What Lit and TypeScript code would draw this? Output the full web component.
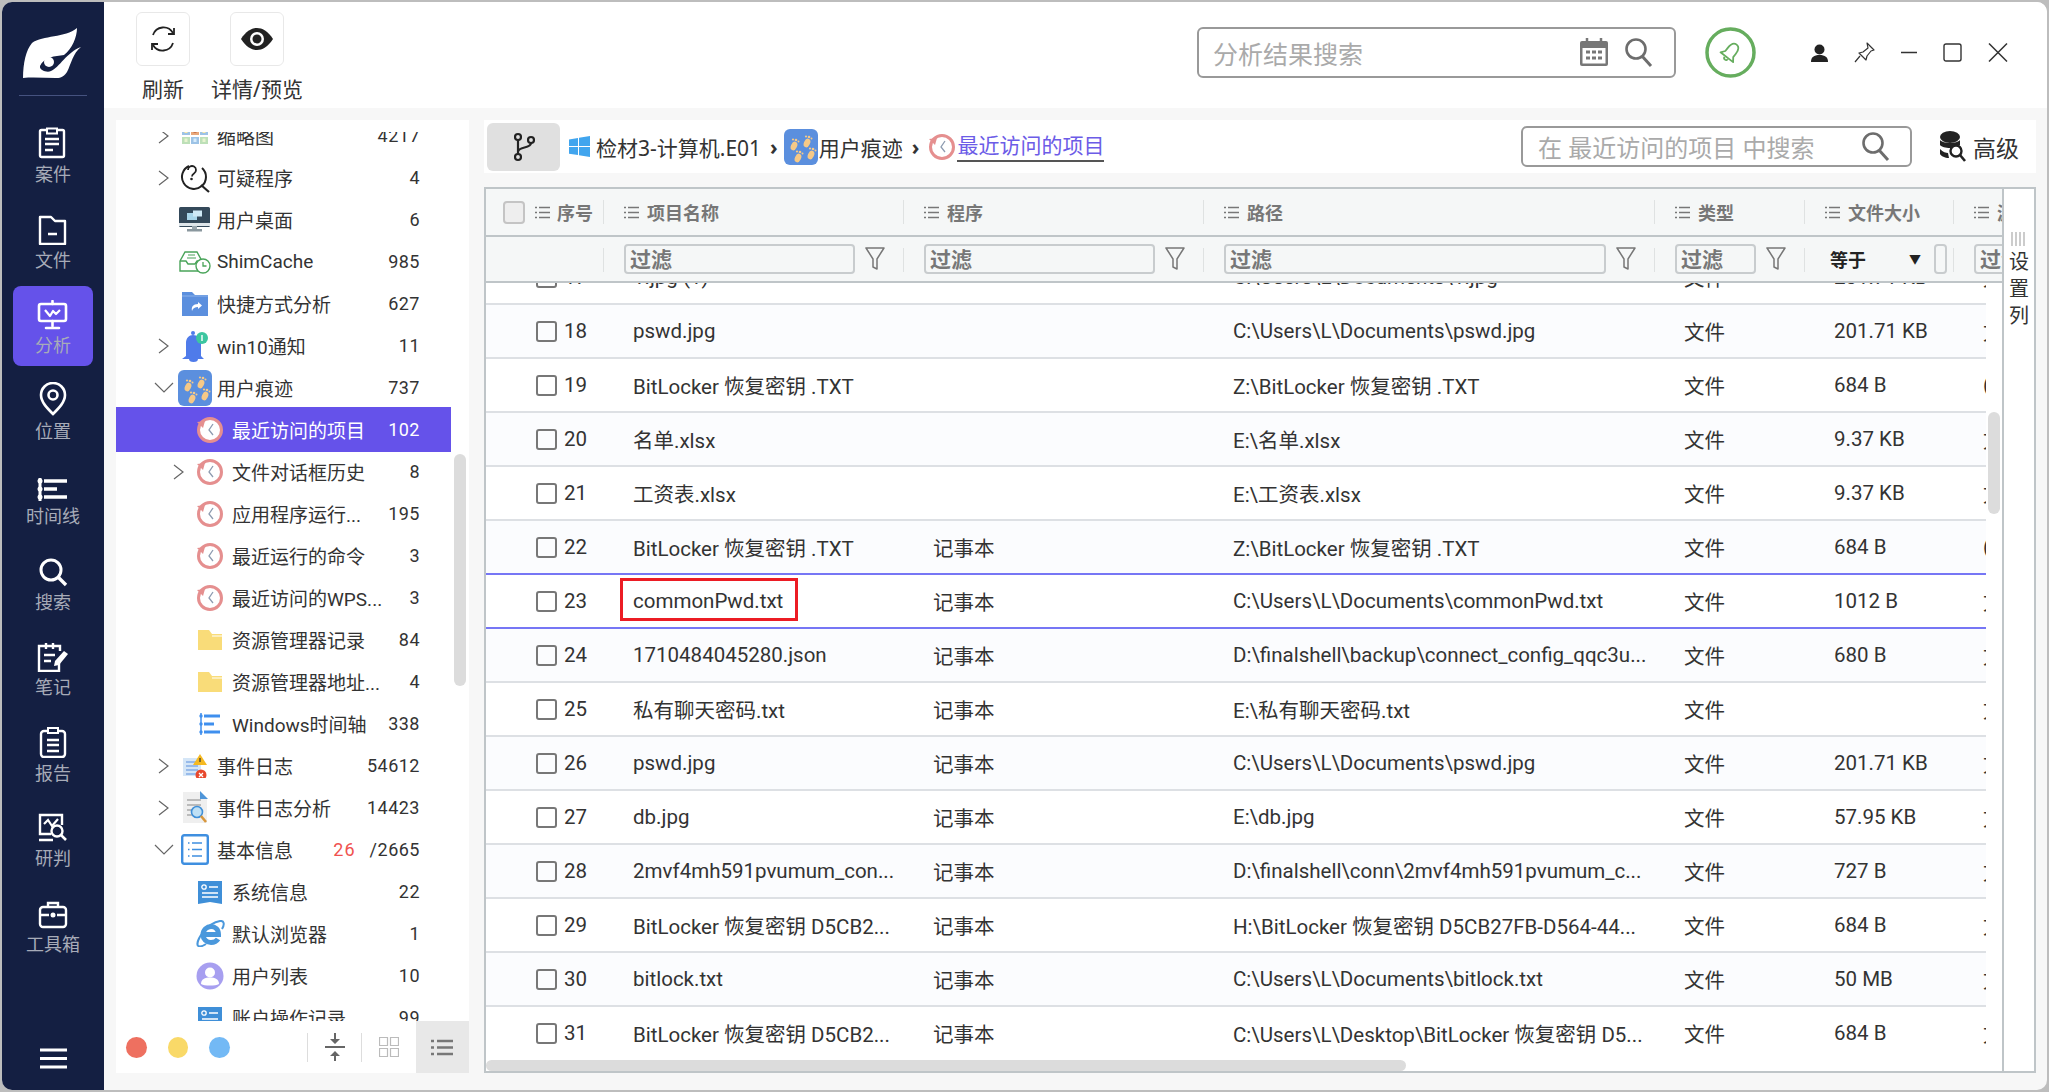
import { LitElement, html, css, svg } from 'lit';
import { customElement } from 'lit/decorators.js';
import { classMap } from 'lit/directives/class-map.js';

const ic = (w: number, h: number, body: unknown, vb = `0 0 ${w} ${h}`) =>
  html`<svg width=${w} height=${h} viewBox=${vb} fill="none">${body}</svg>`;

// ---- nav icons
const navIcons: Record<string, unknown> = {
  case: ic(30, 32, svg`<rect x="2" y="3" width="24" height="27" rx="1.5" stroke="#fff" stroke-width="2.4"/><path d="M9 1.500h10v5H9z" fill="#141f42" stroke="#fff" stroke-width="2"/><path d="M7 12h14M7 17h14M7 23h8" stroke="#fff" stroke-width="2.4"/>`),
  file: ic(30, 30, svg`<path d="M2 2h11l4 4h10v23H2z" stroke="#fff" stroke-width="2.4" stroke-linejoin="round"/><path d="M10 19h9" stroke="#fff" stroke-width="2.4"/>`),
  analyse: ic(32, 30, svg`<rect x="2" y="4" width="27" height="17" rx="2" stroke="#fff" stroke-width="2.6"/><path d="M15.500 1v3M15.500 21v5M9 28h13" stroke="#fff" stroke-width="2.6" stroke-linecap="round"/><path d="M8 10l5 6 3-5 3 3 4-4" stroke="#fff" stroke-width="2.200" stroke-linejoin="round"/>`),
  place: ic(30, 34, svg`<path d="M15 32C9 26 3 20 3 13a12 12 0 0 1 24 0c0 7-6 13-12 19z" stroke="#fff" stroke-width="2.600"/><circle cx="15" cy="13" r="4.500" stroke="#fff" stroke-width="2.600"/>`),
  timeline: ic(32, 24, svg`<path d="M3 1v23" stroke="#fff" stroke-width="3"/><path d="M7 4h23M7 12h13M7 20h23" stroke="#fff" stroke-width="3.600"/><circle cx="3" cy="4" r="2.500" fill="#fff"/><circle cx="3" cy="12" r="2.500" fill="#fff"/><circle cx="3" cy="20" r="2.500" fill="#fff"/>`),
  search: ic(30, 30, svg`<circle cx="13" cy="13" r="10" stroke="#fff" stroke-width="3"/><path d="M20 20l8 8" stroke="#fff" stroke-width="3.400"/>`),
  note: ic(32, 30, svg`<path d="M22 17v12H2V4h21v5" stroke="#fff" stroke-width="2.400"/><path d="M9 1v6M16 1v6M7 13h11M7 19h7" stroke="#fff" stroke-width="2.400"/><path d="M17 24l1-5L27 9l4 3-9 11z" fill="#fff"/>`),
  report: ic(28, 32, svg`<rect x="2" y="5" width="24" height="26" rx="3" stroke="#fff" stroke-width="2.400"/><path d="M9 2h10v5H9z" fill="#141f42" stroke="#fff" stroke-width="2"/><path d="M8 14h12M8 19h12M8 25h12" stroke="#fff" stroke-width="2.400"/>`),
  judge: ic(30, 30, svg`<path d="M13 21H2V2h22v10" stroke="#fff" stroke-width="2.400"/><path d="M6 11l4-4 4 6 6-7" stroke="#fff" stroke-width="2.200"/><circle cx="19" cy="18" r="5.500" stroke="#fff" stroke-width="2.400"/><path d="M23 22l5 5M1 27h14" stroke="#fff" stroke-width="2.600"/>`),
  tools: ic(30, 28, svg`<rect x="2" y="6" width="26" height="20" rx="3" stroke="#fff" stroke-width="2.400"/><path d="M10 6V2h10v4M2 14h9M19 14h9" stroke="#fff" stroke-width="2.400"/><circle cx="15" cy="14" r="2.500" fill="#fff"/>`),
};

// ---- tree icons
const clock = ic(28, 28, svg`<circle cx="14" cy="14" r="11.500" fill="#fff" stroke="#e58f8f" stroke-width="3"/><path d="M1 6l8-1-2 7z" fill="#e58f8f"/><path d="M17 8l-4 6 4 5" stroke="#8d9bb0" stroke-width="1.300"/>`);
const foot = (x: number, y: number) => svg`<ellipse cx=${x} cy=${y} rx="3" ry="4.500" fill="#f6c987" transform="rotate(25 ${x} ${y})"/><circle cx=${x + 2} cy=${y - 6} r="1.300" fill="#f6c987"/><circle cx=${x + 4.500} cy=${y - 4.500} r="1" fill="#f6c987"/><circle cx=${x - 1} cy=${y - 6.500} r="1.100" fill="#f6c987"/>`;
const feetBody = svg`<rect width="34" height="36" rx="6" fill="#5b8fde"/>${foot(10, 17)}${foot(23, 14)}${foot(14, 29)}${foot(27, 26)}`;
const feet = ic(34, 36, feetBody);
const feetWide = ic(36, 36, feetBody, '0 0 34 36');
const folder = ic(24, 20, svg`<path d="M0 0h11l3 4h10v16H0z" fill="#f9dc79"/><path d="M14 6h10" stroke="#fff" stroke-width="1"/>`);
const sysinfo = ic(24, 24, svg`<path d="M0 1h24v23l-12-2-12 2z" fill="#3f8fd8"/><circle cx="6" cy="7" r="2.200" stroke="#fff" stroke-width="1.300"/><path d="M11 7h9M4 13h16M4 17h16" stroke="#fff" stroke-width="1.600"/>`);
const thumbCell = (x: number, y: number, c: string, d: string) => svg`<rect x=${x} y=${y} width="8" height="7" fill=${c}/><rect x=${x + 2.500} y=${y + 1.500} width="3" height="3.500" fill=${d}/>`;

const treeIcons: Record<string, unknown> = {
  thumb: ic(26, 16, svg`${thumbCell(0, 0, '#9dc3e6', '#fbe9a8')}${thumbCell(9, 0, '#e8a77a', '#c9744a')}${thumbCell(18, 0, '#9dc3e6', '#fbe9a8')}${thumbCell(0, 9, '#bde0b8', '#e8f4d0')}${thumbCell(9, 9, '#9dc3e6', '#d7ecfb')}${thumbCell(18, 9, '#bde0b8', '#e8f4d0')}`),
  suspect: ic(30, 30, svg`<path d="M9 3a12 12 0 1 0 13 2" stroke="#222" stroke-width="2"/><path d="M21 22l8 7" stroke="#222" stroke-width="2.200"/><path d="M8 7a4 4 0 1 1 6 3.500c-1.500 1-2 2-2 3" stroke="#222" stroke-width="1.800"/><circle cx="11.500" cy="16" r="1.300" fill="#222"/>`),
  desktop: ic(32, 25, svg`<rect width="31" height="20" rx="1.500" fill="#34495a"/><rect y="16" width="31" height="3" fill="#dfe6ea"/><path d="M13 19h5v3h-5z" fill="#9aa7ae"/><rect x="8" y="22" width="15" height="2.500" fill="#8a979e"/><rect x="8" y="6" width="10" height="7" fill="#a9d6ea"/><rect x="14" y="3.500" width="9" height="6" fill="#cfe9f5"/>`),
  shim: ic(32, 24, svg`<path d="M1 11l5-9h12l5 9v10H1z" fill="#fff" stroke="#4aa45a" stroke-width="1.400"/><path d="M1 11h6l2 3h7l2-3h5" stroke="#4aa45a" stroke-width="1.400"/><path d="M9 5h7M8 8h9" stroke="#4aa45a" stroke-width="1.200"/><circle cx="24" cy="16" r="7" fill="#fff" stroke="#4aa45a" stroke-width="1.400"/><path d="M24 12v4h3.500" stroke="#4aa45a" stroke-width="1.300"/>`),
  shortcut: ic(26, 24, svg`<path d="M0 0h10l3 3h13v21H0z" fill="#5b8fde"/><path d="M0 4h26" stroke="#8db2ea" stroke-width="1"/><path d="M10 19c-1-4 1-7 6-7v-2l4 3.500-4 3.500v-2c-3 0-5 1-6 4z" fill="#fff"/>`),
  bell: ic(28, 32, svg`<circle cx="12" cy="3" r="2" fill="#4f7bea"/><path d="M5 26V13c0-5 3-8 7-8s8 3 8 8v13l3 3H1z" fill="#4f7bea"/><path d="M8 29h9a4.500 3 0 0 1-9 0z" fill="#4f7bea"/><circle cx="21" cy="8" r="6" fill="#3cc6a0"/><path d="M21 5v6" stroke="#fff" stroke-width="1.400"/>`),
  feet,
  clock,
  folder,
  timeline: ic(22, 24, svg`<path d="M2 1v22" stroke="#3f8fee" stroke-width="1.500"/><path d="M5 4h16M5 12h10M5 20h16" stroke="#3f8fee" stroke-width="3"/><circle cx="2" cy="4" r="1.700" fill="#3f8fee"/><circle cx="2" cy="12" r="1.700" fill="#3f8fee"/><circle cx="2" cy="20" r="1.700" fill="#3f8fee"/>`),
  event: ic(24, 24, svg`<rect x="0" y="4" width="18" height="18" fill="#d5e6f7"/><path d="M3 8h12M3 12h12M3 16h12M3 20h12" stroke="#5b8fde" stroke-width="1"/><path d="M17 0l7 11H10z" fill="#f5b921"/><path d="M17 4v4" stroke="#333" stroke-width="1.200"/><circle cx="18" cy="21" r="5.500" fill="#e8482c"/><path d="M16 19l4 4M20 19l-4 4" stroke="#fff" stroke-width="1.300"/>`),
  eventlog: ic(26, 33, svg`<path d="M1 1h17l7 7v24H1z" fill="#efefef"/><path d="M18 0l8 8h-8z" fill="#4f95d8"/><path d="M5 9h14M5 14h14M5 19h8M5 24h10" stroke="#aaa" stroke-width="1.300"/><circle cx="15" cy="21" r="5.500" fill="#bfe0f5" stroke="#3f8fd8" stroke-width="1.600"/><path d="M19 25l5 6" stroke="#d8963a" stroke-width="2.600"/>`),
  list: ic(28, 31, svg`<rect x="1.200" y="1.200" width="25.600" height="28.600" rx="2" stroke="#3f8fe0" stroke-width="2.400"/><path d="M7 9h1.500M11 9h10M7 15.500h1.500M11 15.500h10M7 22h1.500M11 22h10" stroke="#3f8fe0" stroke-width="1.600"/>`),
  sysinfo,
  ie: ic(29, 27, svg`<path d="M7 14.500h15.500C22.500 9 19 6.500 15 6.500S7 10 7 14.500s3.500 8 8 8c3 0 5.500-1 7-3.500" stroke="#4a98dc" stroke-width="5"/><path d="M2 26C-1 21 11 3 24 1c4-.5 5 3 2 8M2 26c2 1 5 0 8-2" stroke="#4a98dc" stroke-width="2"/>`),
  user: ic(28, 28, svg`<circle cx="14" cy="14" r="13.500" fill="#a79ff0"/><circle cx="14" cy="10.500" r="5" fill="#fff"/><path d="M5 22c0-5 4-6.500 9-6.500s9 1.500 9 6.500c-2 1-5 1.500-9 1.500s-7-.5-9-1.500z" fill="#fff"/>`),
};

type TreeRow = { label: string; count: string; icon: string; level: 1 | 2; ch?: 'r' | 'd'; sel?: boolean; red?: string };
const tree: TreeRow[] = [
  { label: '缩略图', count: '4217', icon: 'thumb', level: 1, ch: 'r' },
  { label: '可疑程序', count: '4', icon: 'suspect', level: 1, ch: 'r' },
  { label: '用户桌面', count: '6', icon: 'desktop', level: 1 },
  { label: 'ShimCache', count: '985', icon: 'shim', level: 1 },
  { label: '快捷方式分析', count: '627', icon: 'shortcut', level: 1 },
  { label: 'win10通知', count: '11', icon: 'bell', level: 1, ch: 'r' },
  { label: '用户痕迹', count: '737', icon: 'feet', level: 1, ch: 'd' },
  { label: '最近访问的项目', count: '102', icon: 'clock', level: 2, sel: true },
  { label: '文件对话框历史', count: '8', icon: 'clock', level: 2, ch: 'r' },
  { label: '应用程序运行...', count: '195', icon: 'clock', level: 2 },
  { label: '最近运行的命令', count: '3', icon: 'clock', level: 2 },
  { label: '最近访问的WPS...', count: '3', icon: 'clock', level: 2 },
  { label: '资源管理器记录', count: '84', icon: 'folder', level: 2 },
  { label: '资源管理器地址...', count: '4', icon: 'folder', level: 2 },
  { label: 'Windows时间轴', count: '338', icon: 'timeline', level: 2 },
  { label: '事件日志', count: '54612', icon: 'event', level: 1, ch: 'r' },
  { label: '事件日志分析', count: '14423', icon: 'eventlog', level: 1, ch: 'r' },
  { label: '基本信息', count: '/2665', icon: 'list', level: 1, ch: 'd', red: '26' },
  { label: '系统信息', count: '22', icon: 'sysinfo', level: 2 },
  { label: '默认浏览器', count: '1', icon: 'ie', level: 2 },
  { label: '用户列表', count: '10', icon: 'user', level: 2 },
  { label: '账户操作记录', count: '99', icon: 'sysinfo', level: 2 },
];

const navItems = [
  ['case', '案件'], ['file', '文件'], ['analyse', '分析'], ['place', '位置'], ['timeline', '时间线'],
  ['search', '搜索'], ['note', '笔记'], ['report', '报告'], ['judge', '研判'], ['tools', '工具箱'],
];

const rows: string[][] = [
  ['17', '1.jpg (1)', '', 'C:\\Users\\L\\Documents\\1.jpg', '文件', '201.71 KB', '文'],
  ['18', 'pswd.jpg', '', 'C:\\Users\\L\\Documents\\pswd.jpg', '文件', '201.71 KB', '文'],
  ['19', 'BitLocker 恢复密钥 .TXT', '', 'Z:\\BitLocker 恢复密钥 .TXT', '文件', '684 B', '('],
  ['20', '名单.xlsx', '', 'E:\\名单.xlsx', '文件', '9.37 KB', '文'],
  ['21', '工资表.xlsx', '', 'E:\\工资表.xlsx', '文件', '9.37 KB', '文'],
  ['22', 'BitLocker 恢复密钥 .TXT', '记事本', 'Z:\\BitLocker 恢复密钥 .TXT', '文件', '684 B', '('],
  ['23', 'commonPwd.txt', '记事本', 'C:\\Users\\L\\Documents\\commonPwd.txt', '文件', '1012 B', '文'],
  ['24', '1710484045280.json', '记事本', 'D:\\finalshell\\backup\\connect_config_qqc3u...', '文件', '680 B', '文'],
  ['25', '私有聊天密码.txt', '记事本', 'E:\\私有聊天密码.txt', '文件', '', '文'],
  ['26', 'pswd.jpg', '记事本', 'C:\\Users\\L\\Documents\\pswd.jpg', '文件', '201.71 KB', '文'],
  ['27', 'db.jpg', '记事本', 'E:\\db.jpg', '文件', '57.95 KB', '文'],
  ['28', '2mvf4mh591pvumum_con...', '记事本', 'D:\\finalshell\\conn\\2mvf4mh591pvumum_c...', '文件', '727 B', '文'],
  ['29', 'BitLocker 恢复密钥 D5CB2...', '记事本', 'H:\\BitLocker 恢复密钥 D5CB27FB-D564-44...', '文件', '684 B', '文'],
  ['30', 'bitlock.txt', '记事本', 'C:\\Users\\L\\Documents\\bitlock.txt', '文件', '50 MB', '文'],
  ['31', 'BitLocker 恢复密钥 D5CB2...', '记事本', 'C:\\Users\\L\\Desktop\\BitLocker 恢复密钥 D5...', '文件', '684 B', '文'],
];

const listIcon = ic(15, 13, svg`<path d="M0 1.500h2M0 6.500h2M0 11.500h2M4 1.500h11M4 6.500h11M4 11.500h11" stroke="#777" stroke-width="1.500"/>`);
const funnel = ic(20, 24, svg`<path d="M1 1h18l-7 11v10l-4-2v-8z" stroke="#777" stroke-width="1.500" stroke-linejoin="round"/>`);
const searchIc = ic(30, 31, svg`<circle cx="12" cy="12" r="9.500" stroke="#6d6d6d" stroke-width="2.600"/><path d="M18 19l9 10" stroke="#6d6d6d" stroke-width="3"/>`);

@customElement('app-root')
export class AppRoot extends LitElement {
  static styles = css`
    :host {
      display: block;
      height: 1092px;
      background: #bdbdbd;
      font-family: 'Noto Sans', 'Noto Sans CJK SC', sans-serif;
      color: #333;
    }
    svg { display: block; flex: none; }
    .win {
      position: relative;
      top: 2px;
      margin: 0 2px;
      height: 1088px;
      border-radius: 10px;
      overflow: hidden;
      display: flex;
      background: #f7f7f7;
    }

    /* left nav */
    .nav { width: 102px; flex: none; background: #141f42; display: flex; flex-direction: column; align-items: center; }
    .logo { height: 94px; width: 68px; border-bottom: 1px solid #45527f; display: flex; justify-content: center; padding-top: 26px; box-sizing: border-box; margin-bottom: 19px; }
    .nav-item { width: 80px; height: 80px; margin-bottom: 5.500px; border-radius: 8px; display: flex; flex-direction: column; align-items: center; justify-content: flex-end; gap: 3px; padding-bottom: 9px; box-sizing: border-box; color: #a7abb8; font-size: 18px; line-height: 24px; }
    .nav-item.on { background: #6552ea; }
    .burger { margin-top: auto; margin-bottom: 21px; }

    .main { flex: 1; display: flex; flex-direction: column; min-width: 0; }

    /* top toolbar */
    .top { height: 106px; flex: none; background: #fff; display: flex; padding: 10px 39px 0 32px; box-sizing: border-box; }
    .tools { display: flex; gap: 21px; }
    .tool { display: flex; flex-direction: column; align-items: center; font-size: 21px; color: #333; line-height: 28px; white-space: nowrap; }
    .tool .box { width: 54px; height: 54px; border: 1px solid #e8e8e8; border-radius: 6px; box-sizing: border-box; display: flex; align-items: center; justify-content: center; margin-bottom: 9px; }
    .tool.wide { width: 92px; }
    .right { margin-left: auto; display: flex; align-items: center; height: 53px; margin-top: 14px; }
    .global-search { width: 479px; height: 51px; border: 2px solid #999; border-radius: 6px; box-sizing: border-box; display: flex; align-items: center; padding: 0 20px 0 14px; font-size: 25px; color: #aaa; }
    .global-search span { flex: 1; }
    .global-search .cal { margin-right: 15px; flex: none; }
    .bell { margin-left: 29px; margin-right: 55px; }
    .ctl { margin-right: 26px; }
    .ctl:last-child { margin-right: 0; }

    .content { flex: 1; display: flex; gap: 15px; padding: 12px 11px 17px 12px; min-height: 0; }

    /* tree */
    .tree { width: 353px; flex: none; background: #fff; display: flex; flex-direction: column; position: relative; }
    .tree-scroll { flex: 1; min-height: 0; overflow: hidden; margin-top: 12px; }
    .tree-list { margin-top: -17.500px; }
    .t-row { height: 42px; width: 335px; display: flex; align-items: center; box-sizing: border-box; padding-right: 31px; font-size: 19px; font-family: Roboto, 'Noto Sans CJK SC', sans-serif; color: #333; }
    .t-row.l1 { padding-left: 33px; }
    .t-row.l2 { padding-left: 48px; }
    .t-row.sel { background: #6552ea; color: #fff; height: 45px; margin: -1.500px 0; position: relative; }
    .chev { width: 30px; flex: none; display: flex; justify-content: center; }
    .t-ic { width: 32px; flex: none; display: flex; justify-content: center; margin-right: 6px; }
    .t-label { white-space: nowrap; }
    .t-count { margin-left: auto; font-size: 18px; letter-spacing: .5px; }
    .t-red { color: #f0524f; margin-left: auto; font-size: 18px; letter-spacing: 1px; }
    .t-red + .t-count { margin-left: 14px; }
    .tree-bar { position: absolute; left: 338px; top: 334px; width: 12px; height: 232px; background: #dcdcdc; border-radius: 6px; }
    .tree-foot { height: 52px; flex: none; display: flex; align-items: center; padding-left: 10px; }
    .dot { width: 21px; height: 21px; border-radius: 50%; margin-right: 21px; }
    .dot.red { background: #ee7060; }
    .dot.yellow { background: #f9d968; }
    .dot.blue { background: #73b9f5; margin-right: 77px; }
    .sep { width: 1px; height: 29px; background: #ddd; }
    .foot-btn { display: flex; justify-content: center; width: 54px; }
    .foot-on { height: 52px; background: #e8e8e8; align-items: center; }

    /* right */
    .pane { flex: 1; min-width: 0; display: flex; flex-direction: column; gap: 14px; }
    .crumbs { height: 53px; flex: none; background: #fff; display: flex; align-items: center; padding-left: 3px; font-size: 21px; color: #333; white-space: nowrap; }
    .branch { width: 73px; height: 48px; background: #e0e0e0; border-radius: 6px; display: flex; align-items: center; justify-content: center; margin-right: 9px; }
    .win-ic { margin-right: 6px; }
    .gt { margin: 0 9px; font-size: 21px; font-weight: 700; }
    .gt.first { margin-right: 5px; }
    .link { color: #6c5ce7; border-bottom: 2px solid #555; line-height: 29px; margin-left: 1px; }
    .local-search { margin-left: auto; width: 391px; height: 41px; border: 2px solid #999; border-radius: 6px; box-sizing: border-box; display: flex; align-items: center; justify-content: space-between; padding: 0 19px 0 15px; font-size: 24px; color: #aaa; }
    .adv { display: flex; align-items: center; gap: 7px; font-size: 23px; margin: 0 17px 0 27px; color: #333; }

    /* table */
    .table { flex: 1; min-height: 0; display: flex; border: solid #bfc5c8; border-width: 2px 0 2px 2px; background: #fff; }
    .t-main { flex: 1; min-width: 0; display: flex; flex-direction: column; position: relative; overflow: hidden; }
    .cols { display: grid; grid-template-columns: 118px 300px 300px 451px 150px 149px 150px; }
    .t-head { flex: none; height: 48px; background: #f5f7f7; border-bottom: 2px solid #bfc5c8; box-sizing: border-box; width: 1518px; }
    .t-head > div { display: flex; align-items: center; padding-left: 20px; gap: 8px; font-size: 18px; font-weight: 700; color: #777; white-space: nowrap; height: 46px; position: relative; overflow: hidden; box-sizing: border-box; }
    .t-filter > div::before, .t-head > div::before { content: ''; position: absolute; right: 0; top: 11px; height: 24px; width: 1px; background: #dfe2e2; }
    .t-head > div:first-child { padding-left: 17px; gap: 7px; }
    .t-head .all { width: 22px; height: 23px; border: 2px solid #c4c4c4; border-radius: 4px; background: #eee; box-sizing: border-box; margin-right: 3px; }
    .t-filter { flex: none; height: 46px; background: #f5f7f7; border-bottom: 2px solid #bfc5c8; box-sizing: border-box; width: 1518px; }
    .t-filter > div { display: flex; align-items: center; padding-left: 20px; gap: 10px; height: 44px; position: relative; box-sizing: border-box; overflow: hidden; }
    .inp { flex: 1; min-width: 0; height: 30px; border: 2px solid #c8ccce; border-radius: 4px; box-sizing: border-box; font-size: 21px; font-weight: 700; color: #777; padding-left: 4px; line-height: 26px; overflow: hidden; }
    .flt { margin-right: 19px; }
    .eq { flex: 1; display: flex; align-items: center; font-size: 18px; font-weight: 700; color: #222; padding-left: 5px; }
    .eq i { margin-left: auto; font-style: normal; font-size: 12px; margin-right: 3px; }
    .mini { width: 13px; height: 30px; border: 2px solid #c8ccce; border-radius: 4px; box-sizing: border-box; margin-right: 7px; flex: none; }
    .t-body { flex: 1; min-height: 0; overflow: hidden; width: 1500px; }
    .t-rows { margin-top: -34px; }
    .row { height: 54px; box-sizing: border-box; border-top: 2px solid #dde0e4; background: #fff; font-family: Roboto, 'Noto Sans CJK SC', sans-serif; font-size: 20.500px; color: #333; position: relative; align-items: center; overflow: hidden; }
    .row.even { background: #fbfcfe; }
    .row.sel, .row.after { border-top-color: #7676f5; }
    .row > div { padding-left: 29px; white-space: nowrap; overflow: hidden; }
    .row > div:first-child { padding-left: 50px; display: flex; align-items: center; gap: 7px; }
    .ck { width: 21px; height: 21px; border: 2px solid #777; border-radius: 3px; box-sizing: border-box; flex: none; }
    .mark { position: absolute; left: 134px; top: 3px; width: 178px; height: 43px; border: 3px solid #ec1c24; box-sizing: border-box; }
    .v-bar { position: absolute; left: 1502px; top: 223px; width: 12px; height: 102px; border-radius: 6px; background: #dcdcdc; }
    .h-bar { position: absolute; left: 0; bottom: 0; width: 920px; height: 11px; border-radius: 6px; background: #dcdcdc; }
    .setting { width: 30px; flex: none; border-left: 2px solid #bfc5c8; border-right: 2px solid #bfc5c8; font-size: 20px; line-height: 27px; text-align: center; color: #333; padding-top: 43px; box-sizing: content-box; }
    .setting div { width: 20px; margin: 0 auto; }
    .setting svg { margin: 0 auto 2px; }
  `;

  private renderTreeRow(r: TreeRow) {
    const chevron = r.ch === 'r'
      ? ic(12, 16, svg`<path d="M1 1l9 7-9 7" stroke="#666" stroke-width="1.200"/>`)
      : r.ch === 'd'
        ? ic(20, 12, svg`<path d="M1 1l9 9 9-9" stroke="#666" stroke-width="1.200"/>`)
        : '';
    return html`
      <div class=${classMap({ 't-row': true, l1: r.level === 1, l2: r.level === 2, sel: !!r.sel })}>
        <span class="chev">${chevron}</span>
        <span class="t-ic">${treeIcons[r.icon]}</span>
        <span class="t-label">${r.label}</span>
        ${r.red ? html`<span class="t-red">${r.red}</span>` : ''}
        <span class="t-count">${r.count}</span>
      </div>`;
  }

  private renderRow(r: string[]) {
    const classes = {
      row: true,
      cols: true,
      even: Number(r[0]) % 2 === 0,
      sel: r[0] === '23',
      after: r[0] === '24',
    };
    return html`
      <div class=${classMap(classes)}>
        <div><span class="ck"></span>${r[0]}</div>
        <div>${r[1]}</div>
        <div>${r[2]}</div>
        <div>${r[3]}</div>
        <div>${r[4]}</div>
        <div>${r[5]}</div>
        <div>${r[6]}</div>
        ${r[0] === '23' ? html`<span class="mark"></span>` : ''}
      </div>`;
  }

  render() {
    return html`
      <div class="win">
        <nav class="nav">
          <div class="logo">
            ${ic(60, 54, svg`<path d="M0 50C0 35 3 22 9 15 20 7 42 10 54 0c0 9-5 21-13 27-9 1-20 2-24 11-1 4 7 7 11 5 8-3 16-19 30-24-8 6-10 17-14 25-4 6-8 6-11 6-11 0-23-1-33 0z" fill="#fff"/><circle cx="26" cy="34" r="5" fill="#fff"/>`)}
          </div>
          ${navItems.map(([k, label]) => html`
            <div class=${classMap({ 'nav-item': true, on: k === 'analyse' })}>${navIcons[k]}<span>${label}</span></div>`)}
          <div class="burger">${ic(27, 21, svg`<path d="M0 2h27M0 10.500h27M0 19h27" stroke="#fff" stroke-width="3"/>`)}</div>
        </nav>
        <div class="main">
          <header class="top">
            <div class="tools">
              <div class="tool">
                <div class="box">${ic(30, 30, svg`<path d="M5 11a11 11 0 0 1 20-2M25 19a11 11 0 0 1-20 2" stroke="#222" stroke-width="1.800"/><path d="M26 4v6h-6M4 26v-6h6" stroke="#222" stroke-width="1.800"/>`)}</div>
                刷新
              </div>
              <div class="tool wide">
                <div class="box">${ic(34, 24, svg`<path d="M1 12C6 4 12 1 17 1s11 3 16 11c-5 8-11 11-16 11S6 20 1 12z" fill="#222"/><circle cx="17" cy="12" r="7" fill="#fff"/><circle cx="17" cy="12" r="4.500" fill="#222"/>`)}</div>
                详情/预览
              </div>
            </div>
            <div class="right">
              <div class="global-search">
                <span>分析结果搜索</span>
                <span class="cal">${ic(30, 29, svg`<rect x="1" y="3" width="28" height="25" rx="2" fill="#777"/><rect x="3.500" y="10" width="23" height="15.500" fill="#fff"/><path d="M8 0v5M22 0v5" stroke="#777" stroke-width="2.500"/><path d="M7 14h4M13 14h4M19 14h4M7 20h4M13 20h4M19 20h4" stroke="#777" stroke-width="3"/>`)}</span>
                ${searchIc}
              </div>
              <span class="bell">${ic(51, 51, svg`<circle cx="25.500" cy="25.500" r="23.500" fill="#fff" stroke="#66ad5e" stroke-width="3.500"/><g transform="translate(25.500 25.500) rotate(38)" stroke="#66ad5e" stroke-width="1.800" stroke-linejoin="round"><path d="M0-10C-4-10-5-6-5-2V2L-8 6H8L5 2V-2C5-6 4-10 0-10z"/><path d="M-2 7a2 2 0 0 0 4 0"/></g>`)}</span>
              <span class="ctl">${ic(17, 18, svg`<circle cx="8.500" cy="5.500" r="5" fill="#222"/><path d="M0 18c0-5 3-7 8.500-7s8.500 2 8.500 7z" fill="#222"/>`)}</span>
              <span class="ctl">${ic(21, 21, svg`<path d="M13 1l7 7-3 1-4 5-1 4-7-7 4-1 5-4zM6 14l-5 6" stroke="#333" stroke-width="1.200" stroke-linejoin="round"/>`)}</span>
              <span class="ctl">${ic(16, 3, svg`<path d="M0 1.500h16" stroke="#333" stroke-width="1.600"/>`)}</span>
              <span class="ctl">${ic(19, 19, svg`<rect x="1" y="1" width="17" height="17" rx="2" stroke="#333" stroke-width="1.400"/>`)}</span>
              <span class="ctl">${ic(20, 19, svg`<path d="M1 .5l18 18M19 .5l-18 18" stroke="#333" stroke-width="1.500"/>`)}</span>
            </div>
          </header>
          <div class="content">
            <aside class="tree">
              <div class="tree-scroll"><div class="tree-list">${tree.map((r) => this.renderTreeRow(r))}</div></div>
              <div class="tree-bar"></div>
              <div class="tree-foot">
                <span class="dot red"></span>
                <span class="dot yellow"></span>
                <span class="dot blue"></span>
                <span class="sep"></span>
                <span class="foot-btn">${ic(20, 28, svg`<path d="M0 14h20M10 0v9M10 28v-9" stroke="#666" stroke-width="2"/><path d="M5 6l5 5 5-5zM5 23l5-5 5 5z" fill="#666"/>`)}</span>
                <span class="sep"></span>
                <span class="foot-btn">${ic(20, 20, svg`<path d="M.5.5h8v8h-8zM11.500.5h8v8h-8zM.5 11.500h8v8h-8zM11.500 11.500h8v8h-8z" stroke="#bbb" stroke-width="1.200"/>`)}</span>
                <span class="foot-btn foot-on">${ic(22, 17, svg`<path d="M0 2h3M0 8.500h3M0 15h3M6 2h16M6 8.500h16M6 15h16" stroke="#777" stroke-width="2.600"/>`)}</span>
              </div>
            </aside>
            <section class="pane">
              <div class="crumbs">
                <div class="branch">${ic(24, 30, svg`<circle cx="6" cy="5" r="3" stroke="#222" stroke-width="2.200"/><circle cx="6" cy="25" r="3" stroke="#222" stroke-width="2.200"/><circle cx="19" cy="8" r="3" stroke="#222" stroke-width="2.200"/><path d="M6 8v14M6 20c0-6 13-3 13-9" stroke="#222" stroke-width="2.200"/>`)}</div>
                <span class="win-ic">${ic(21, 21, svg`<path d="M0 3.500l9-1.500v8H0zM10 1.800l11-1.800v10H10zM0 11h9v8l-9-1.300zM10 11h11v10l-11-1.800z" fill="#41a5ee"/>`)}</span>
                <span>检材3-计算机.E01</span>
                <span class="gt first">›</span>
                ${feetWide}
                <span>用户痕迹</span>
                <span class="gt">›</span>
                ${clock}
                <span class="link">最近访问的项目</span>
                <div class="local-search"><span>在 最近访问的项目 中搜索</span>${searchIc}</div>
                <div class="adv">
                  ${ic(27, 32, svg`<ellipse cx="11" cy="6" rx="10" ry="6" fill="#222"/><path d="M1 9c3 4 17 4 20 0v5c-3 4-17 4-20 0zM1 18c3 3 6 4 8 4l1 5c-4 0-8-2-9-4z" fill="#222"/><circle cx="17" cy="20" r="5.500" fill="#fff" stroke="#222" stroke-width="2.400"/><path d="M21 24l5 6" stroke="#222" stroke-width="2.600"/>`)}
                  高级
                </div>
              </div>
              <div class="table">
                <div class="t-main">
                  <div class="t-head cols">
                    <div><span class="all"></span>${listIcon}序号</div>
                    ${['项目名称', '程序', '路径', '类型', '文件大小', '源'].map((h) => html`<div>${listIcon}${h}</div>`)}
                  </div>
                  <div class="t-filter cols">
                    <div></div>
                    <div><span class="inp">过滤</span><span class="flt">${funnel}</span></div>
                    <div><span class="inp">过滤</span><span class="flt">${funnel}</span></div>
                    <div><span class="inp">过滤</span><span class="flt">${funnel}</span></div>
                    <div><span class="inp">过滤</span><span class="flt">${funnel}</span></div>
                    <div><span class="eq">等于<i>▼</i></span><span class="mini"></span></div>
                    <div><span class="inp">过滤</span></div>
                  </div>
                  <div class="t-body"><div class="t-rows">${rows.map((r) => this.renderRow(r))}</div></div>
                  <div class="v-bar"></div>
                  <div class="h-bar"></div>
                </div>
                <div class="setting">
                  ${ic(16, 14, svg`<path d="M1 0v14M5 0v14M9 0v14M13 0v14" stroke="#999" stroke-width="1"/>`)}
                  <div>设置列</div>
                </div>
              </div>
            </section>
          </div>
        </div>
      </div>
    `;
  }
}
